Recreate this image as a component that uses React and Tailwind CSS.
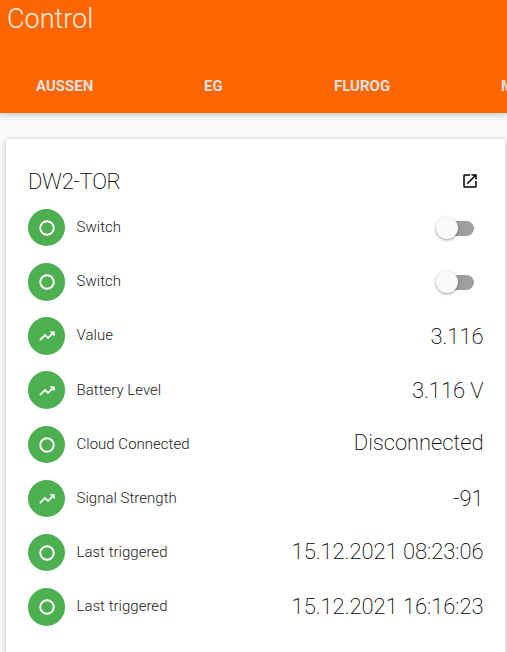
import React from 'react';
import { MdOpenInNew } from 'react-icons/md';

const tabs = [
    { name: 'AUSSEN', className: 'w-[168px]' },
    { name: 'EG', className: 'w-[130px]' },
    { name: 'FLUROG', className: 'w-[167px]' },
    { name: 'M', className: '' },
];

const items = [
    { label: 'Switch', type: 'switch' },
    { label: 'Switch', type: 'switch' },
    { label: 'Value', value: '3.116', trend: true },
    { label: 'Battery Level', value: '3.116 V', trend: true },
    { label: 'Cloud Connected', value: 'Disconnected', valueClass: 'pb-[4px]' },
    { label: 'Signal Strength', value: '-91', trend: true, valueClass: 'pb-[2px]' },
    { label: 'Last triggered', value: '15.12.2021 08:23:06', valueClass: 'pb-[3px]' },
    { label: 'Last triggered', value: '15.12.2021 16:16:23', valueClass: 'pb-[2px]' },
];

const RingIcon = () => (
    <svg viewBox="0 0 24 24" className="h-[18px] w-[18px] fill-none stroke-white">
        <circle cx="12" cy="12" r="9" strokeWidth="2.6" />
    </svg>
);

const TrendIcon = () => (
    <svg viewBox="0 0 24 24" className="h-[18px] w-[18px] fill-white stroke-white">
        <path
            strokeWidth="0.7"
            d="M16 6l2.29 2.29-4.88 4.88-4-4L2 16.59 3.41 18l6-6 4 4 6.3-6.29L22 12V6z"
        />
    </svg>
);

const Toggle = () => (
    <div className="mr-[9px] mt-px flex h-[22px] w-[39px] items-center">
        <span className="z-10 h-[22px] w-[22px] shrink-0 rounded-full bg-[#fafafa] shadow-[0_1px_3px_rgba(0,0,0,0.4)]" />
        <span className="-ml-[18px] mt-px h-[15px] w-[34px] rounded-full bg-[#9e9e9e]" />
    </div>
);

const ItemRow = ({ item }) => (
    <div className="flex h-[54.2px] items-center">
        <div className="flex h-[37.5px] w-[37px] shrink-0 items-center justify-center rounded-full bg-[#4caf50] pl-px pt-px">
            {item.trend ? <TrendIcon /> : <RingIcon />}
        </div>
        <span className="ml-[11.5px] grow pb-[1.2px] text-[15px] leading-5 tracking-[0.02px]">{item.label}</span>
        {item.type === 'switch' ? (
            <Toggle />
        ) : (
            <span className={`mt-[2px] text-[22px] font-extralight leading-7 tracking-[-0.06px] text-black ${item.valueClass || ''}`}>
                {item.value}
            </span>
        )}
    </div>
);

const App = () => {
    return (
        <div className="flex h-[652px] w-full flex-col overflow-hidden bg-[#fafafa] font-['Roboto',sans-serif] font-light text-[#212121]">
            <header className="z-10 flex h-[113px] shrink-0 flex-col justify-between bg-[#ff6600] shadow-[0_2px_6px_rgba(0,0,0,0.2)]">
                <h1 className="pl-[7px] pt-px text-[27px] leading-9 text-white/90">Control</h1>
                <nav className="flex h-[54px] items-center overflow-hidden pl-9 text-[15px] font-bold text-[#e0e0e0]">
                    {tabs.map((tab) => (
                        <span key={tab.name} className={`shrink-0 ${tab.className}`}>
                            {tab.name}
                        </span>
                    ))}
                </nav>
            </header>

            <main className="ml-[6px] mr-[2px] mt-[26px] h-[560px] shrink-0 rounded-[2px] bg-white pl-[22px] pr-[21.5px] pt-6 shadow-[0_1px_5px_rgba(0,0,0,0.3)]">
                <div className="flex h-9 items-center justify-between">
                    <h2 className="pt-[2px] text-[22px] font-extralight leading-8 tracking-[-0.3px] text-black">DW2-TOR</h2>
                    <MdOpenInNew size={18} className="mr-[4.5px] text-black" />
                </div>
                <div className="mt-[1.5px]">
                    {items.map((item, index) => (
                        <ItemRow key={index} item={item} />
                    ))}
                </div>
            </main>
        </div>
    );
};

export default App;
